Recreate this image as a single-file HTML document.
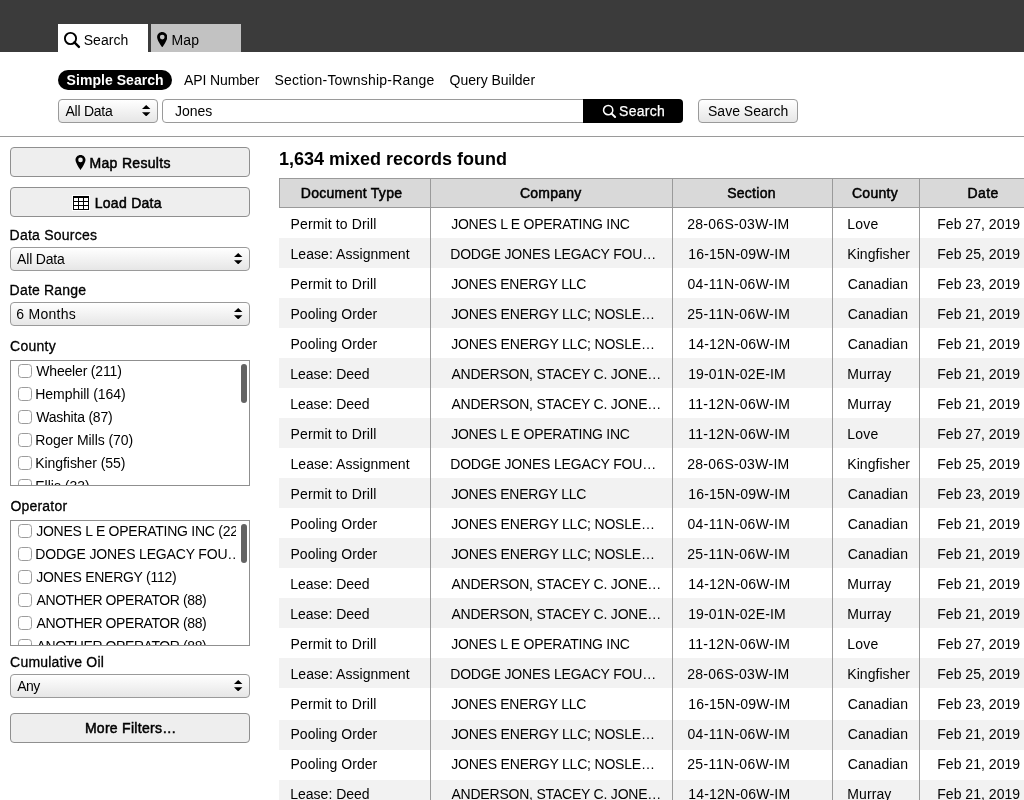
<!DOCTYPE html>
<html><head><meta charset="utf-8"><style>
html,body{margin:0;padding:0}
body{width:1024px;height:800px;overflow:hidden;position:relative;background:#fff;font-family:"Liberation Sans",sans-serif;font-size:14px;color:#000}
div{box-sizing:border-box}
.t{position:absolute;white-space:nowrap;line-height:16px;font-size:14px}
.box{position:absolute}
.btn{position:absolute;left:10px;width:240px;height:30px;background:#eeeeee;border:1px solid #8f8f8f;border-radius:4px}
.sel{position:absolute;height:24px;border:1px solid #9a9a9a;border-radius:4px;background:linear-gradient(#ffffff,#e6e6e6)}
.list{position:absolute;left:10px;width:240px;height:126px;border:1px solid #8f8f8f;overflow:hidden;background:#fff}
.clip{position:absolute;left:0;top:0;width:225px;height:124px;overflow:hidden}
.cb{position:absolute;left:7px;width:14px;height:14px;border:1px solid #9c9c9c;border-radius:3.5px;background:#fff}
.thumb{position:absolute;left:230px;width:6px;height:39px;border-radius:3px;background:#636363}
.row{position:absolute;left:279px;width:800px;height:30px}
.vl{position:absolute;top:178px;width:1px;height:622px;background:#9a9a9a}
#root{position:absolute;left:0;top:0;width:1024px;height:800px;will-change:transform}
</style></head><body><div id="root">

<div class="box" style="left:0;top:0;width:1024px;height:52px;background:#3b3b3b"></div>
<div class="box" style="left:58px;top:24px;width:90px;height:28px;background:#fff"></div>
<div class="box" style="left:151px;top:24px;width:90px;height:28px;background:#c2c2c2"></div>
<svg width="18" height="18" viewBox="0 0 18 18" style="position:absolute;left:63px;top:31px"><circle cx="7.5" cy="7.5" r="5.6" fill="none" stroke="#000" stroke-width="1.9"/><line x1="11.4" y1="11.4" x2="15.9" y2="15.9" stroke="#000" stroke-width="2.4" stroke-linecap="round"/></svg>
<svg width="10.5" height="15.4" viewBox="0 0 10 15" style="position:absolute;left:156.6px;top:32px"><path d="M5 0C2.2 0 0 2.2 0 5c0 3 5 10 5 10s5-7 5-10C10 2.2 7.8 0 5 0z M5 2.6a2.3 2.3 0 1 1 0 4.6a2.3 2.3 0 1 1 0-4.6z" fill="#000" fill-rule="evenodd"/></svg>
<div class="box" style="left:58px;top:70px;width:114px;height:20px;background:#000;border-radius:10px"></div>
<div class="sel" style="left:58px;top:99px;width:100px"></div>
<svg width="8.4" height="11.4" viewBox="0 0 8.4 11.4" style="position:absolute;left:142.3px;top:105px"><path d="M4.2 0L8.4 4.1H0z M4.2 11.4L8.4 7.3H0z" fill="#000"/></svg>
<div class="box" style="left:162px;top:99px;width:425px;height:24px;border:1px solid #9a9a9a;border-radius:4px 0 0 4px;background:#fff"></div>
<div class="box" style="left:583px;top:99px;width:100px;height:24px;background:#000;border-radius:0 4px 4px 0"></div>
<svg width="14.8" height="14.8" viewBox="0 0 18 18" style="position:absolute;left:602.2px;top:103.9px"><circle cx="7.5" cy="7.5" r="5.6" fill="none" stroke="#fff" stroke-width="1.9"/><line x1="11.4" y1="11.4" x2="15.9" y2="15.9" stroke="#fff" stroke-width="2.4" stroke-linecap="round"/></svg>
<div class="sel" style="left:698px;top:99px;width:100px"></div>
<div class="box" style="left:0;top:136px;width:1024px;height:1px;background:#9a9a9a"></div>
<div class="btn" style="top:147px"></div>
<svg width="11" height="15" viewBox="0 0 10 15" style="position:absolute;left:74.5px;top:155.3px"><path d="M5 0C2.2 0 0 2.2 0 5c0 3 5 10 5 10s5-7 5-10C10 2.2 7.8 0 5 0z M5 2.6a2.3 2.3 0 1 1 0 4.6a2.3 2.3 0 1 1 0-4.6z" fill="#000" fill-rule="evenodd"/></svg>
<div class="btn" style="top:187px"></div>
<svg width="18" height="16" viewBox="-1 -1 18 16" style="position:absolute;left:72px;top:195px"><rect x="-1" y="-1" width="18" height="16" fill="#fff"/><path d="M0 0H16V14H0z M1 2H5V5H1z M6 2H10V5H6z M11 2H15V5H11z M1 6H5V9H1z M6 6H10V9H6z M11 6H15V9H11z M1 10H5V13H1z M6 10H10V13H6z M11 10H15V13H11z" fill="#000" fill-rule="evenodd"/></svg>
<div class="sel" style="left:10px;top:247px;width:240px"></div>
<svg width="8.4" height="11.4" viewBox="0 0 8.4 11.4" style="position:absolute;left:234.3px;top:253px"><path d="M4.2 0L8.4 4.1H0z M4.2 11.4L8.4 7.3H0z" fill="#000"/></svg>
<div class="sel" style="left:10px;top:302px;width:240px"></div>
<svg width="8.4" height="11.4" viewBox="0 0 8.4 11.4" style="position:absolute;left:234.3px;top:308px"><path d="M4.2 0L8.4 4.1H0z M4.2 11.4L8.4 7.3H0z" fill="#000"/></svg>
<div class="list" style="top:360px"><div class="cb" style="top:3px"></div><div class="cb" style="top:26px"></div><div class="cb" style="top:49px"></div><div class="cb" style="top:72px"></div><div class="cb" style="top:95px"></div><div class="cb" style="top:118px"></div><div class="clip"><div class="t" style="left:25.25px;top:2px;font-size:14px;line-height:16px;font-weight:400;color:#000;letter-spacing:-0.175px;">Wheeler (211)</div><div class="t" style="left:24.25px;top:25px;font-size:14px;line-height:16px;font-weight:400;color:#000;letter-spacing:-0.046px;">Hemphill (164)</div><div class="t" style="left:25.25px;top:48px;font-size:14px;line-height:16px;font-weight:400;color:#000;letter-spacing:-0.223px;">Washita (87)</div><div class="t" style="left:24.25px;top:71px;font-size:14px;line-height:16px;font-weight:400;color:#000;letter-spacing:-0.057px;">Roger Mills (70)</div><div class="t" style="left:24.25px;top:94px;font-size:14px;line-height:16px;font-weight:400;color:#000;letter-spacing:-0.064px;">Kingfisher (55)</div><div class="t" style="left:24.25px;top:117px;font-size:14px;line-height:16px;font-weight:400;color:#000;letter-spacing:0.000px;">Ellis (33)</div></div><div class="thumb" style="top:3px"></div></div>
<div class="list" style="top:520px"><div class="cb" style="top:3px"></div><div class="cb" style="top:26px"></div><div class="cb" style="top:49px"></div><div class="cb" style="top:72px"></div><div class="cb" style="top:95px"></div><div class="cb" style="top:118px"></div><div class="clip"><div class="t" style="left:25.25px;top:2px;font-size:14px;line-height:16px;font-weight:400;color:#000;letter-spacing:-0.260px;">JONES L E OPERATING INC (224)</div><div class="t" style="left:24.25px;top:25px;font-size:14px;line-height:16px;font-weight:400;color:#000;letter-spacing:-0.168px;">DODGE JONES LEGACY FOU…</div><div class="t" style="left:25.25px;top:48px;font-size:14px;line-height:16px;font-weight:400;color:#000;letter-spacing:-0.274px;">JONES ENERGY (112)</div><div class="t" style="left:25.50px;top:71px;font-size:14px;line-height:16px;font-weight:400;color:#000;letter-spacing:-0.410px;">ANOTHER OPERATOR (88)</div><div class="t" style="left:25.50px;top:94px;font-size:14px;line-height:16px;font-weight:400;color:#000;letter-spacing:-0.410px;">ANOTHER OPERATOR (88)</div><div class="t" style="left:25.50px;top:117px;font-size:14px;line-height:16px;font-weight:400;color:#000;letter-spacing:-0.410px;">ANOTHER OPERATOR (88)</div></div><div class="thumb" style="top:3px"></div></div>
<div class="sel" style="left:10px;top:674px;width:240px"></div>
<svg width="8.4" height="11.4" viewBox="0 0 8.4 11.4" style="position:absolute;left:234.3px;top:680px"><path d="M4.2 0L8.4 4.1H0z M4.2 11.4L8.4 7.3H0z" fill="#000"/></svg>
<div class="btn" style="top:713px"></div>
<div class="box" style="left:279px;top:178px;width:760px;height:30px;background:#d9d9d9;border-top:1px solid #9a9a9a;border-bottom:1px solid #9a9a9a"></div>
<div class="row" style="top:208px;background:#fff"></div>
<div class="row" style="top:238px;background:#f2f2f2"></div>
<div class="row" style="top:268px;background:#fff"></div>
<div class="row" style="top:298px;background:#f2f2f2"></div>
<div class="row" style="top:328px;background:#fff"></div>
<div class="row" style="top:358px;background:#f2f2f2"></div>
<div class="row" style="top:388px;background:#fff"></div>
<div class="row" style="top:418px;background:#f2f2f2"></div>
<div class="row" style="top:448px;background:#fff"></div>
<div class="row" style="top:478px;background:#f2f2f2"></div>
<div class="row" style="top:508px;background:#fff"></div>
<div class="row" style="top:538px;background:#f2f2f2"></div>
<div class="row" style="top:568px;background:#fff"></div>
<div class="row" style="top:598px;background:#f2f2f2"></div>
<div class="row" style="top:628px;background:#fff"></div>
<div class="row" style="top:658px;background:#f2f2f2"></div>
<div class="row" style="top:688px;background:#fff"></div>
<div class="row" style="top:720px;background:#f2f2f2"></div>
<div class="row" style="top:750px;background:#fff"></div>
<div class="row" style="top:780px;background:#f2f2f2"></div>
<div class="vl" style="left:430px"></div>
<div class="vl" style="left:672px"></div>
<div class="vl" style="left:832px"></div>
<div class="vl" style="left:919px"></div>
<div class="vl" style="left:279px;height:30px"></div>
<div class="t" style="left:83.70px;top:32px;font-size:14px;line-height:16px;font-weight:400;color:#000;letter-spacing:0.060px;">Search</div>
<div class="t" style="left:171.45px;top:32px;font-size:14px;line-height:16px;font-weight:400;color:#000;letter-spacing:0.200px;">Map</div>
<div class="t" style="left:66.60px;top:72px;font-size:14px;line-height:16px;font-weight:700;color:#fff;letter-spacing:0.042px;">Simple Search</div>
<div class="t" style="left:184.10px;top:72px;font-size:14px;line-height:16px;font-weight:400;color:#000;letter-spacing:-0.111px;">API Number</div>
<div class="t" style="left:274.45px;top:72px;font-size:14px;line-height:16px;font-weight:400;color:#000;letter-spacing:0.198px;">Section-Township-Range</div>
<div class="t" style="left:449.55px;top:72px;font-size:14px;line-height:16px;font-weight:400;color:#000;letter-spacing:-0.008px;">Query Builder</div>
<div class="t" style="left:65.50px;top:103px;font-size:14px;line-height:16px;font-weight:400;color:#000;letter-spacing:-0.250px;">All Data</div>
<div class="t" style="left:174.95px;top:103px;font-size:14px;line-height:16px;font-weight:400;color:#000;letter-spacing:0.000px;">Jones</div>
<div class="t" style="left:619.00px;top:103px;font-size:14px;line-height:16px;font-weight:400;color:#fff;letter-spacing:0.300px;-webkit-text-stroke:0.25px #fff;">Search</div>
<div class="t" style="left:708.00px;top:103px;font-size:14px;line-height:16px;font-weight:400;color:#000;letter-spacing:0.005px;">Save Search</div>
<div class="t" style="left:89.50px;top:155px;font-size:14px;line-height:16px;font-weight:400;color:#000;letter-spacing:0.320px;-webkit-text-stroke:0.5px #000;">Map Results</div>
<div class="t" style="left:94.70px;top:195px;font-size:14px;line-height:16px;font-weight:400;color:#000;letter-spacing:0.281px;-webkit-text-stroke:0.5px #000;">Load Data</div>
<div class="t" style="left:9.60px;top:227px;font-size:14px;line-height:16px;font-weight:400;color:#000;letter-spacing:0.227px;-webkit-text-stroke:0.3px #000;">Data Sources</div>
<div class="t" style="left:17.10px;top:251px;font-size:14px;line-height:16px;font-weight:400;color:#000;letter-spacing:-0.193px;">All Data</div>
<div class="t" style="left:9.60px;top:282px;font-size:14px;line-height:16px;font-weight:400;color:#000;letter-spacing:0.194px;-webkit-text-stroke:0.3px #000;">Date Range</div>
<div class="t" style="left:16.35px;top:306px;font-size:14px;line-height:16px;font-weight:400;color:#000;letter-spacing:0.271px;">6 Months</div>
<div class="t" style="left:10.10px;top:338px;font-size:14px;line-height:16px;font-weight:400;color:#000;letter-spacing:0.240px;-webkit-text-stroke:0.3px #000;">County</div>
<div class="t" style="left:10.40px;top:498px;font-size:14px;line-height:16px;font-weight:400;color:#000;letter-spacing:0.207px;-webkit-text-stroke:0.3px #000;">Operator</div>
<div class="t" style="left:10.10px;top:654px;font-size:14px;line-height:16px;font-weight:400;color:#000;letter-spacing:0.212px;-webkit-text-stroke:0.3px #000;">Cumulative Oil</div>
<div class="t" style="left:17.30px;top:678px;font-size:14px;line-height:16px;font-weight:400;color:#000;letter-spacing:-0.550px;">Any</div>
<div class="t" style="left:84.90px;top:720px;font-size:14px;line-height:16px;font-weight:400;color:#000;letter-spacing:0.287px;-webkit-text-stroke:0.5px #000;">More Filters…</div>
<div class="t" style="left:278.95px;top:149px;font-size:18px;line-height:20px;font-weight:700;color:#000;letter-spacing:0.004px;">1,634 mixed records found</div>
<div class="t" style="left:300.80px;top:185px;font-size:14px;line-height:16px;font-weight:400;color:#000;letter-spacing:0.283px;-webkit-text-stroke:0.5px #000;">Document Type</div>
<div class="t" style="left:520.00px;top:185px;font-size:14px;line-height:16px;font-weight:400;color:#000;letter-spacing:0.208px;-webkit-text-stroke:0.5px #000;">Company</div>
<div class="t" style="left:727.15px;top:185px;font-size:14px;line-height:16px;font-weight:400;color:#000;letter-spacing:0.275px;-webkit-text-stroke:0.5px #000;">Section</div>
<div class="t" style="left:852.00px;top:185px;font-size:14px;line-height:16px;font-weight:400;color:#000;letter-spacing:0.260px;-webkit-text-stroke:0.5px #000;">County</div>
<div class="t" style="left:967.50px;top:185px;font-size:14px;line-height:16px;font-weight:400;color:#000;letter-spacing:0.417px;-webkit-text-stroke:0.5px #000;">Date</div>
<div class="t" style="left:290.50px;top:216px;font-size:14px;line-height:16px;font-weight:400;color:#000;letter-spacing:0.129px;">Permit to Drill</div>
<div class="t" style="left:451.20px;top:216px;font-size:14px;line-height:16px;font-weight:400;color:#000;letter-spacing:-0.257px;">JONES L E OPERATING INC</div>
<div class="t" style="left:687.15px;top:216px;font-size:14px;line-height:16px;font-weight:400;color:#000;letter-spacing:0.296px;">28-06S-03W-IM</div>
<div class="t" style="left:847.35px;top:216px;font-size:14px;line-height:16px;font-weight:400;color:#000;letter-spacing:0.200px;">Love</div>
<div class="t" style="left:937.25px;top:216px;font-size:14px;line-height:16px;font-weight:400;color:#000;letter-spacing:0.027px;">Feb 27, 2019</div>
<div class="t" style="left:290.50px;top:246px;font-size:14px;line-height:16px;font-weight:400;color:#000;letter-spacing:0.050px;">Lease: Assignment</div>
<div class="t" style="left:450.20px;top:246px;font-size:14px;line-height:16px;font-weight:400;color:#000;letter-spacing:-0.168px;">DODGE JONES LEGACY FOU…</div>
<div class="t" style="left:688.20px;top:246px;font-size:14px;line-height:16px;font-weight:400;color:#000;letter-spacing:0.212px;">16-15N-09W-IM</div>
<div class="t" style="left:847.35px;top:246px;font-size:14px;line-height:16px;font-weight:400;color:#000;letter-spacing:0.039px;">Kingfisher</div>
<div class="t" style="left:937.25px;top:246px;font-size:14px;line-height:16px;font-weight:400;color:#000;letter-spacing:0.027px;">Feb 25, 2019</div>
<div class="t" style="left:290.50px;top:276px;font-size:14px;line-height:16px;font-weight:400;color:#000;letter-spacing:0.129px;">Permit to Drill</div>
<div class="t" style="left:451.20px;top:276px;font-size:14px;line-height:16px;font-weight:400;color:#000;letter-spacing:-0.250px;">JONES ENERGY LLC</div>
<div class="t" style="left:687.40px;top:276px;font-size:14px;line-height:16px;font-weight:400;color:#000;letter-spacing:0.363px;">04-11N-06W-IM</div>
<div class="t" style="left:847.85px;top:276px;font-size:14px;line-height:16px;font-weight:400;color:#000;letter-spacing:0.021px;">Canadian</div>
<div class="t" style="left:937.25px;top:276px;font-size:14px;line-height:16px;font-weight:400;color:#000;letter-spacing:0.027px;">Feb 23, 2019</div>
<div class="t" style="left:290.50px;top:306px;font-size:14px;line-height:16px;font-weight:400;color:#000;letter-spacing:0.025px;">Pooling Order</div>
<div class="t" style="left:451.20px;top:306px;font-size:14px;line-height:16px;font-weight:400;color:#000;letter-spacing:-0.193px;">JONES ENERGY LLC; NOSLE…</div>
<div class="t" style="left:687.15px;top:306px;font-size:14px;line-height:16px;font-weight:400;color:#000;letter-spacing:0.383px;">25-11N-06W-IM</div>
<div class="t" style="left:847.85px;top:306px;font-size:14px;line-height:16px;font-weight:400;color:#000;letter-spacing:0.021px;">Canadian</div>
<div class="t" style="left:937.25px;top:306px;font-size:14px;line-height:16px;font-weight:400;color:#000;letter-spacing:0.027px;">Feb 21, 2019</div>
<div class="t" style="left:290.50px;top:336px;font-size:14px;line-height:16px;font-weight:400;color:#000;letter-spacing:0.025px;">Pooling Order</div>
<div class="t" style="left:451.20px;top:336px;font-size:14px;line-height:16px;font-weight:400;color:#000;letter-spacing:-0.193px;">JONES ENERGY LLC; NOSLE…</div>
<div class="t" style="left:688.20px;top:336px;font-size:14px;line-height:16px;font-weight:400;color:#000;letter-spacing:0.212px;">14-12N-06W-IM</div>
<div class="t" style="left:847.85px;top:336px;font-size:14px;line-height:16px;font-weight:400;color:#000;letter-spacing:0.021px;">Canadian</div>
<div class="t" style="left:937.25px;top:336px;font-size:14px;line-height:16px;font-weight:400;color:#000;letter-spacing:0.027px;">Feb 21, 2019</div>
<div class="t" style="left:290.31px;top:366px;font-size:14px;line-height:16px;font-weight:400;color:#000;letter-spacing:-0.011px;">Lease: Deed</div>
<div class="t" style="left:451.45px;top:366px;font-size:14px;line-height:16px;font-weight:400;color:#000;letter-spacing:-0.210px;">ANDERSON, STACEY C. JONE…</div>
<div class="t" style="left:688.20px;top:366px;font-size:14px;line-height:16px;font-weight:400;color:#000;letter-spacing:0.150px;">19-01N-02E-IM</div>
<div class="t" style="left:847.35px;top:366px;font-size:14px;line-height:16px;font-weight:400;color:#000;letter-spacing:0.070px;">Murray</div>
<div class="t" style="left:937.25px;top:366px;font-size:14px;line-height:16px;font-weight:400;color:#000;letter-spacing:0.027px;">Feb 21, 2019</div>
<div class="t" style="left:290.31px;top:396px;font-size:14px;line-height:16px;font-weight:400;color:#000;letter-spacing:-0.011px;">Lease: Deed</div>
<div class="t" style="left:451.45px;top:396px;font-size:14px;line-height:16px;font-weight:400;color:#000;letter-spacing:-0.210px;">ANDERSON, STACEY C. JONE…</div>
<div class="t" style="left:688.20px;top:396px;font-size:14px;line-height:16px;font-weight:400;color:#000;letter-spacing:0.296px;">11-12N-06W-IM</div>
<div class="t" style="left:847.35px;top:396px;font-size:14px;line-height:16px;font-weight:400;color:#000;letter-spacing:0.070px;">Murray</div>
<div class="t" style="left:937.25px;top:396px;font-size:14px;line-height:16px;font-weight:400;color:#000;letter-spacing:0.027px;">Feb 21, 2019</div>
<div class="t" style="left:290.50px;top:426px;font-size:14px;line-height:16px;font-weight:400;color:#000;letter-spacing:0.129px;">Permit to Drill</div>
<div class="t" style="left:451.20px;top:426px;font-size:14px;line-height:16px;font-weight:400;color:#000;letter-spacing:-0.257px;">JONES L E OPERATING INC</div>
<div class="t" style="left:688.20px;top:426px;font-size:14px;line-height:16px;font-weight:400;color:#000;letter-spacing:0.296px;">11-12N-06W-IM</div>
<div class="t" style="left:847.35px;top:426px;font-size:14px;line-height:16px;font-weight:400;color:#000;letter-spacing:0.200px;">Love</div>
<div class="t" style="left:937.25px;top:426px;font-size:14px;line-height:16px;font-weight:400;color:#000;letter-spacing:0.027px;">Feb 27, 2019</div>
<div class="t" style="left:290.50px;top:456px;font-size:14px;line-height:16px;font-weight:400;color:#000;letter-spacing:0.050px;">Lease: Assignment</div>
<div class="t" style="left:450.20px;top:456px;font-size:14px;line-height:16px;font-weight:400;color:#000;letter-spacing:-0.168px;">DODGE JONES LEGACY FOU…</div>
<div class="t" style="left:687.15px;top:456px;font-size:14px;line-height:16px;font-weight:400;color:#000;letter-spacing:0.296px;">28-06S-03W-IM</div>
<div class="t" style="left:847.35px;top:456px;font-size:14px;line-height:16px;font-weight:400;color:#000;letter-spacing:0.039px;">Kingfisher</div>
<div class="t" style="left:937.25px;top:456px;font-size:14px;line-height:16px;font-weight:400;color:#000;letter-spacing:0.027px;">Feb 25, 2019</div>
<div class="t" style="left:290.50px;top:486px;font-size:14px;line-height:16px;font-weight:400;color:#000;letter-spacing:0.129px;">Permit to Drill</div>
<div class="t" style="left:451.20px;top:486px;font-size:14px;line-height:16px;font-weight:400;color:#000;letter-spacing:-0.250px;">JONES ENERGY LLC</div>
<div class="t" style="left:688.20px;top:486px;font-size:14px;line-height:16px;font-weight:400;color:#000;letter-spacing:0.212px;">16-15N-09W-IM</div>
<div class="t" style="left:847.85px;top:486px;font-size:14px;line-height:16px;font-weight:400;color:#000;letter-spacing:0.021px;">Canadian</div>
<div class="t" style="left:937.25px;top:486px;font-size:14px;line-height:16px;font-weight:400;color:#000;letter-spacing:0.027px;">Feb 23, 2019</div>
<div class="t" style="left:290.50px;top:516px;font-size:14px;line-height:16px;font-weight:400;color:#000;letter-spacing:0.025px;">Pooling Order</div>
<div class="t" style="left:451.20px;top:516px;font-size:14px;line-height:16px;font-weight:400;color:#000;letter-spacing:-0.193px;">JONES ENERGY LLC; NOSLE…</div>
<div class="t" style="left:687.40px;top:516px;font-size:14px;line-height:16px;font-weight:400;color:#000;letter-spacing:0.363px;">04-11N-06W-IM</div>
<div class="t" style="left:847.85px;top:516px;font-size:14px;line-height:16px;font-weight:400;color:#000;letter-spacing:0.021px;">Canadian</div>
<div class="t" style="left:937.25px;top:516px;font-size:14px;line-height:16px;font-weight:400;color:#000;letter-spacing:0.027px;">Feb 21, 2019</div>
<div class="t" style="left:290.50px;top:546px;font-size:14px;line-height:16px;font-weight:400;color:#000;letter-spacing:0.025px;">Pooling Order</div>
<div class="t" style="left:451.20px;top:546px;font-size:14px;line-height:16px;font-weight:400;color:#000;letter-spacing:-0.193px;">JONES ENERGY LLC; NOSLE…</div>
<div class="t" style="left:687.15px;top:546px;font-size:14px;line-height:16px;font-weight:400;color:#000;letter-spacing:0.383px;">25-11N-06W-IM</div>
<div class="t" style="left:847.85px;top:546px;font-size:14px;line-height:16px;font-weight:400;color:#000;letter-spacing:0.021px;">Canadian</div>
<div class="t" style="left:937.25px;top:546px;font-size:14px;line-height:16px;font-weight:400;color:#000;letter-spacing:0.027px;">Feb 21, 2019</div>
<div class="t" style="left:290.31px;top:576px;font-size:14px;line-height:16px;font-weight:400;color:#000;letter-spacing:-0.011px;">Lease: Deed</div>
<div class="t" style="left:451.45px;top:576px;font-size:14px;line-height:16px;font-weight:400;color:#000;letter-spacing:-0.210px;">ANDERSON, STACEY C. JONE…</div>
<div class="t" style="left:688.20px;top:576px;font-size:14px;line-height:16px;font-weight:400;color:#000;letter-spacing:0.212px;">14-12N-06W-IM</div>
<div class="t" style="left:847.35px;top:576px;font-size:14px;line-height:16px;font-weight:400;color:#000;letter-spacing:0.070px;">Murray</div>
<div class="t" style="left:937.25px;top:576px;font-size:14px;line-height:16px;font-weight:400;color:#000;letter-spacing:0.027px;">Feb 21, 2019</div>
<div class="t" style="left:290.31px;top:606px;font-size:14px;line-height:16px;font-weight:400;color:#000;letter-spacing:-0.011px;">Lease: Deed</div>
<div class="t" style="left:451.45px;top:606px;font-size:14px;line-height:16px;font-weight:400;color:#000;letter-spacing:-0.210px;">ANDERSON, STACEY C. JONE…</div>
<div class="t" style="left:688.20px;top:606px;font-size:14px;line-height:16px;font-weight:400;color:#000;letter-spacing:0.150px;">19-01N-02E-IM</div>
<div class="t" style="left:847.35px;top:606px;font-size:14px;line-height:16px;font-weight:400;color:#000;letter-spacing:0.070px;">Murray</div>
<div class="t" style="left:937.25px;top:606px;font-size:14px;line-height:16px;font-weight:400;color:#000;letter-spacing:0.027px;">Feb 21, 2019</div>
<div class="t" style="left:290.50px;top:636px;font-size:14px;line-height:16px;font-weight:400;color:#000;letter-spacing:0.129px;">Permit to Drill</div>
<div class="t" style="left:451.20px;top:636px;font-size:14px;line-height:16px;font-weight:400;color:#000;letter-spacing:-0.257px;">JONES L E OPERATING INC</div>
<div class="t" style="left:688.20px;top:636px;font-size:14px;line-height:16px;font-weight:400;color:#000;letter-spacing:0.296px;">11-12N-06W-IM</div>
<div class="t" style="left:847.35px;top:636px;font-size:14px;line-height:16px;font-weight:400;color:#000;letter-spacing:0.200px;">Love</div>
<div class="t" style="left:937.25px;top:636px;font-size:14px;line-height:16px;font-weight:400;color:#000;letter-spacing:0.027px;">Feb 27, 2019</div>
<div class="t" style="left:290.50px;top:666px;font-size:14px;line-height:16px;font-weight:400;color:#000;letter-spacing:0.050px;">Lease: Assignment</div>
<div class="t" style="left:450.20px;top:666px;font-size:14px;line-height:16px;font-weight:400;color:#000;letter-spacing:-0.168px;">DODGE JONES LEGACY FOU…</div>
<div class="t" style="left:687.15px;top:666px;font-size:14px;line-height:16px;font-weight:400;color:#000;letter-spacing:0.296px;">28-06S-03W-IM</div>
<div class="t" style="left:847.35px;top:666px;font-size:14px;line-height:16px;font-weight:400;color:#000;letter-spacing:0.039px;">Kingfisher</div>
<div class="t" style="left:937.25px;top:666px;font-size:14px;line-height:16px;font-weight:400;color:#000;letter-spacing:0.027px;">Feb 25, 2019</div>
<div class="t" style="left:290.50px;top:696px;font-size:14px;line-height:16px;font-weight:400;color:#000;letter-spacing:0.129px;">Permit to Drill</div>
<div class="t" style="left:451.20px;top:696px;font-size:14px;line-height:16px;font-weight:400;color:#000;letter-spacing:-0.250px;">JONES ENERGY LLC</div>
<div class="t" style="left:688.20px;top:696px;font-size:14px;line-height:16px;font-weight:400;color:#000;letter-spacing:0.212px;">16-15N-09W-IM</div>
<div class="t" style="left:847.85px;top:696px;font-size:14px;line-height:16px;font-weight:400;color:#000;letter-spacing:0.021px;">Canadian</div>
<div class="t" style="left:937.25px;top:696px;font-size:14px;line-height:16px;font-weight:400;color:#000;letter-spacing:0.027px;">Feb 23, 2019</div>
<div class="t" style="left:290.50px;top:726px;font-size:14px;line-height:16px;font-weight:400;color:#000;letter-spacing:0.025px;">Pooling Order</div>
<div class="t" style="left:451.20px;top:726px;font-size:14px;line-height:16px;font-weight:400;color:#000;letter-spacing:-0.193px;">JONES ENERGY LLC; NOSLE…</div>
<div class="t" style="left:687.40px;top:726px;font-size:14px;line-height:16px;font-weight:400;color:#000;letter-spacing:0.363px;">04-11N-06W-IM</div>
<div class="t" style="left:847.85px;top:726px;font-size:14px;line-height:16px;font-weight:400;color:#000;letter-spacing:0.021px;">Canadian</div>
<div class="t" style="left:937.25px;top:726px;font-size:14px;line-height:16px;font-weight:400;color:#000;letter-spacing:0.027px;">Feb 21, 2019</div>
<div class="t" style="left:290.50px;top:756px;font-size:14px;line-height:16px;font-weight:400;color:#000;letter-spacing:0.025px;">Pooling Order</div>
<div class="t" style="left:451.20px;top:756px;font-size:14px;line-height:16px;font-weight:400;color:#000;letter-spacing:-0.193px;">JONES ENERGY LLC; NOSLE…</div>
<div class="t" style="left:687.15px;top:756px;font-size:14px;line-height:16px;font-weight:400;color:#000;letter-spacing:0.383px;">25-11N-06W-IM</div>
<div class="t" style="left:847.85px;top:756px;font-size:14px;line-height:16px;font-weight:400;color:#000;letter-spacing:0.021px;">Canadian</div>
<div class="t" style="left:937.25px;top:756px;font-size:14px;line-height:16px;font-weight:400;color:#000;letter-spacing:0.027px;">Feb 21, 2019</div>
<div class="t" style="left:290.31px;top:786px;font-size:14px;line-height:16px;font-weight:400;color:#000;letter-spacing:-0.011px;">Lease: Deed</div>
<div class="t" style="left:451.45px;top:786px;font-size:14px;line-height:16px;font-weight:400;color:#000;letter-spacing:-0.210px;">ANDERSON, STACEY C. JONE…</div>
<div class="t" style="left:688.20px;top:786px;font-size:14px;line-height:16px;font-weight:400;color:#000;letter-spacing:0.212px;">14-12N-06W-IM</div>
<div class="t" style="left:847.35px;top:786px;font-size:14px;line-height:16px;font-weight:400;color:#000;letter-spacing:0.070px;">Murray</div>
<div class="t" style="left:937.25px;top:786px;font-size:14px;line-height:16px;font-weight:400;color:#000;letter-spacing:0.027px;">Feb 21, 2019</div>
</div></body></html>
